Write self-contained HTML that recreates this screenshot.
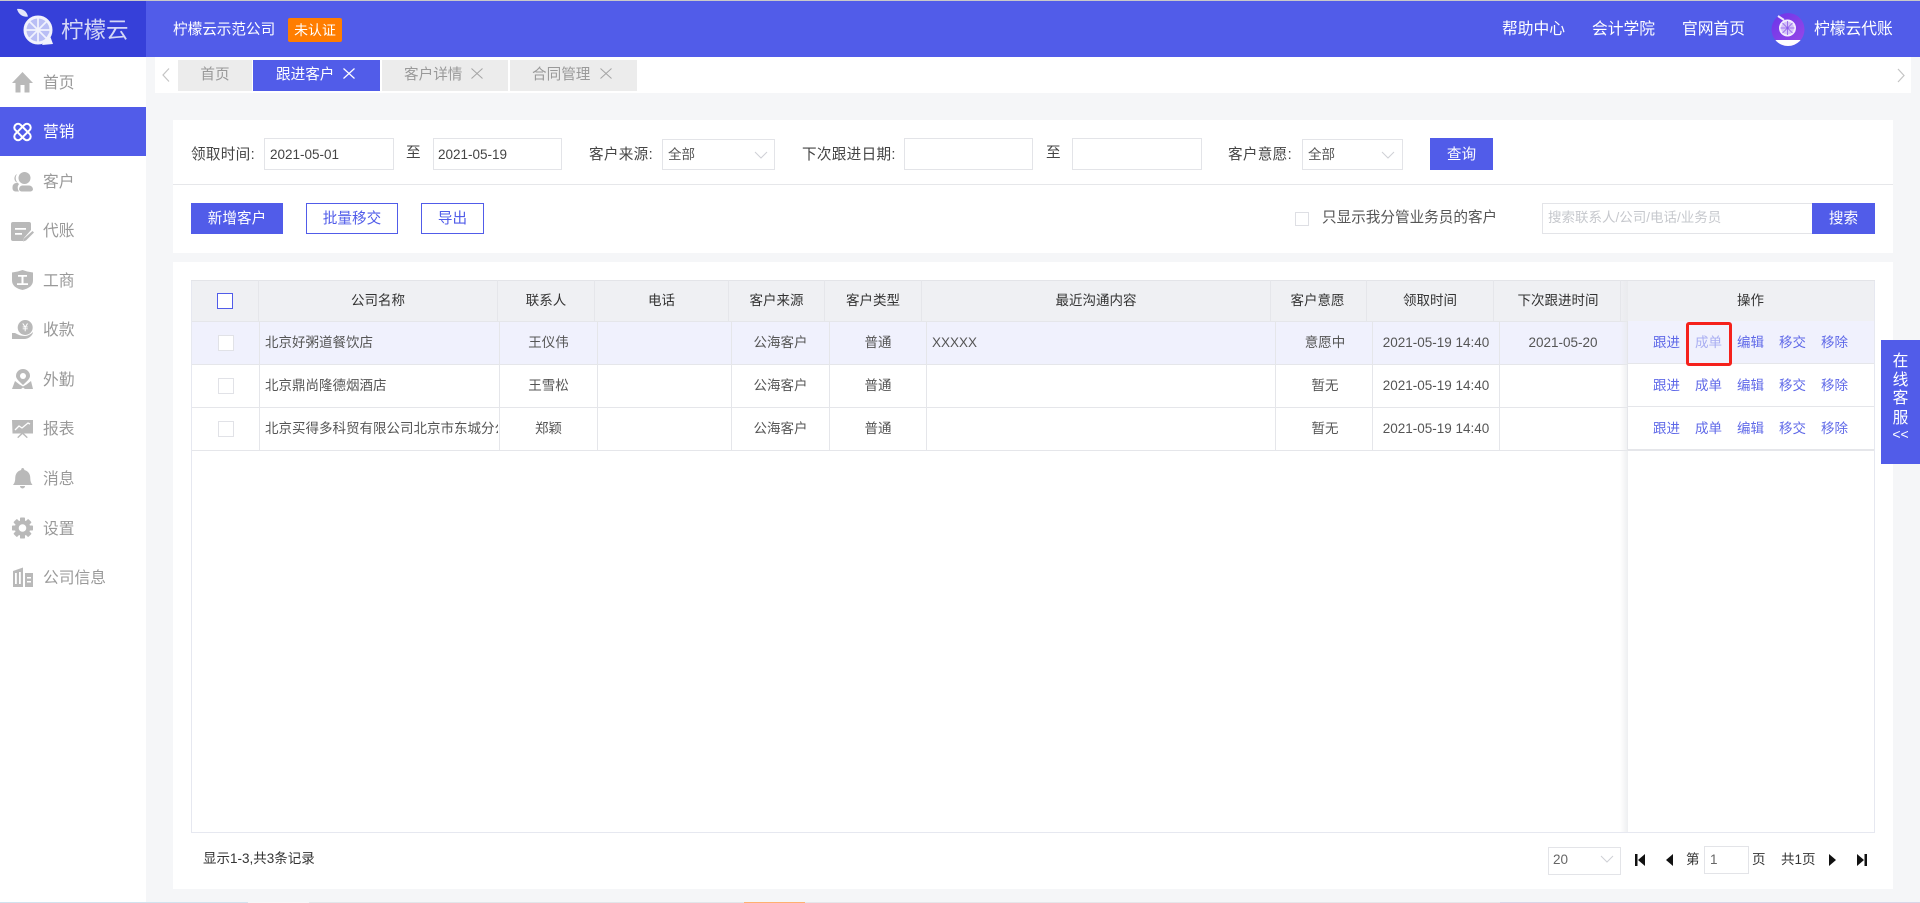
<!DOCTYPE html>
<html lang="zh-CN"><head><meta charset="utf-8"><title>柠檬云</title>
<style>
*{box-sizing:border-box;margin:0;padding:0}
html,body{width:1920px;height:903px;overflow:hidden;background:#f5f6f8}
body{position:relative;font-family:"Liberation Sans","Noto Sans CJK SC",sans-serif;font-size:13.5px;color:#555}
div,span,svg{position:absolute}
.t{white-space:nowrap;line-height:20px;height:20px}
.c{text-align:center}
.box{background:#fff;border:1px solid #e3e4e8}
.nav{left:43px;font-size:15.75px;color:#999}
.w{color:#fff}
.f{font-size:14.6px;color:#444;letter-spacing:.3px}
.tab{top:60px;height:31px;background:#ececec}
.tabt{top:65px;font-size:14.6px;color:#999}
.btn{background:#515ce9;color:#fff;font-size:14.6px;text-align:center;line-height:32px}
.q{line-height:34px}
.obtn{background:#fff;color:#515ce9;border:1px solid #515ce9;font-size:14.6px;text-align:center;line-height:30px}
.h{top:290.5px;color:#333;text-align:center}
.hl{top:280px;width:1px;height:41px;background:#e5e6ea}
.bl{top:321px;width:1px;height:129px;background:#e5e6ea}
.rl{left:192px;width:1436px;height:1px;background:#e5e6ea}
.r1{top:333px}.r2{top:376px}.r3{top:419px}
.cell{color:#555;text-align:center}
.a{color:#5f69e8;font-size:13.5px}
.cb{left:218px;width:16px;height:16px;background:#fff;border:1px solid #e1e2e7}
</style></head><body>

<!-- top bar -->
<div style="left:0;top:0;width:1920px;height:1px;background:#c9c9c9"></div>
<div style="left:0;top:1px;width:1920px;height:56px;background:#515ce9"></div>
<div style="left:0;top:1px;width:146px;height:56px;background:#3640d9"></div>
<svg style="left:14px;top:6px" width="46" height="44" viewBox="14 6 46 44">
<path d="M17 9c5-.5 9.500 1.500 11 7.500-5 1-9.500-2-11-7.500z" fill="#e4e6fa"/>
<circle cx="38" cy="30" r="13" fill="#b9bef5" stroke="#f1f2fd" stroke-width="3"/>
<path d="M49 33l4 11-11 1z" fill="#f1f2fd"/>
<path d="M38 17v26M25 30h26M29 21l18 18M47 21L29 39" stroke="#f1f2fd" stroke-width="1.800"/>
<circle cx="38" cy="30" r="2.500" fill="#f1f2fd"/>
</svg>
<div class="t" style="left:61px;top:17px;height:28px;line-height:28px;font-size:22.500px;color:#d4d7f6">柠檬云</div>
<div class="t w" style="left:173px;top:20px;font-size:14.6px">柠檬云示范公司</div>
<div style="left:288px;top:18px;width:54px;height:24px;background:#ff7d00;border-radius:2px"></div>
<div class="t w c" style="left:288px;top:20px;width:54px;font-size:13.9px">未认证</div>
<div class="t w" style="left:1502px;top:20px;font-size:15.75px">帮助中心</div>
<div class="t w" style="left:1592px;top:20px;font-size:15.75px">会计学院</div>
<div class="t w" style="left:1682px;top:20px;font-size:15.75px">官网首页</div>
<svg style="left:1771px;top:12px" width="34" height="35" viewBox="0 0 34 35">
<defs><linearGradient id="g" x1="0" y1="0" x2="1" y2="1"><stop offset="0" stop-color="#6a35ea"/><stop offset="1" stop-color="#9a48e6"/></linearGradient><clipPath id="ac"><circle cx="17" cy="17.500" r="16.500"/></clipPath></defs>
<circle cx="17" cy="17.500" r="16.500" fill="url(#g)"/>
<rect x="0" y="28" width="34" height="7" fill="#fff" clip-path="url(#ac)"/>
<path d="M7 4l6 4" stroke="#eee6fd" stroke-width="2"/>
<circle cx="16.500" cy="16" r="7.500" fill="#d4c2f8" stroke="#f3eefe" stroke-width="2"/>
<path d="M16.500 9v14M9.500 16h14M11.500 11l10 10M21.500 11l-10 10" stroke="#8d5cea" stroke-width=".8"/>
</svg>
<div class="t w" style="left:1814px;top:20px;font-size:15.75px">柠檬云代账</div>

<!-- sidebar -->
<div style="left:0;top:57px;width:146px;height:846px;background:#fff"></div>
<div style="left:0;top:107px;width:146px;height:49px;background:#515ce9"></div>
<svg style="left:0;top:57px" width="146" height="540" viewBox="0 57 146 540" fill="#b9b9b9">
<path d="M22.500 72 12 83h3.500v9.500h5V85h4v7.500h5V83H33z"/>
<g fill="none" stroke="#fff" stroke-width="2"><rect x="-10" y="-3.700" width="20" height="7.400" rx="3.600" transform="translate(22.500 132) rotate(45)"/><rect x="-10" y="-3.700" width="20" height="7.400" rx="3.600" transform="translate(22.500 132) rotate(-45)"/></g>
<circle cx="24.500" cy="178" r="6"/><path d="M17 174a5 5 0 0 0-1.500 7.500l2 1.500h-1a4 4 0 0 0-4 4v1.500a3 3 0 0 0 3 3H19a6 6 0 0 1 0-7.500 7 7 0 0 1-2-10zM22 185.500h7a4 4 0 0 1 4 3.500 2.500 2.500 0 0 1-2.500 2.500h-9a2.500 2.500 0 0 1-2.500-2.500 4 4 0 0 1 3-3.500z"/>
<path d="M13 222h16a2 2 0 0 1 2 2v6l-7 8-1 3H13a2 2 0 0 1-2-2v-15a2 2 0 0 1 2-2z"/>
<path d="M15 228h11v1.800H15zM15 233h7v1.800h-7z" fill="#fff"/><path d="M32.500 231l1.500 1.500-8 8-3 1 1-3z"/>
<path d="M22.500 270q5 2 10.500 2.500v8c0 5-4 8-10.500 9.500-6.500-1.500-10.500-4.500-10.500-9.500v-8q5.500-.5 10.500-2.500z"/>
<path d="M18 275h9v1.800h-3.500v6.400H28V285H17v-1.800h4.500v-6.400H18z" fill="#fff"/>
<circle cx="25.200" cy="327.500" r="7.500"/><path d="M12 333h3c2 1 5 3 10 3 3 0 6-2 8-4 0 3-4 7-9 7H12z"/>
<path d="M22.200 323.500h1.300l1.700 2.800 1.700-2.800h1.300l-2 3h1.500v.9h-2v1h2v.9h-2v2h-1v-2h-2v-.9h2v-1h-2v-.9h1.500z" fill="#fff"/>
<path d="M23 369a7 7 0 0 1 7 7c0 3-4 6-7 9-3-3-7-6-7-9a7 7 0 0 1 7-7z"/><circle cx="23" cy="376" r="3" fill="#fff"/>
<path d="M15 381l4.500 3.500 3.500 2 3.500-2L31 381l2 8h-8l-2-1.500-2 1.500h-9z"/>
<path d="M12 420h21v13.500H24l3.800 3.800-1 .8-4.300-4-4.300 4-1-.8 3.800-3.800h-8.500z"/>
<path d="M15 430l4-4 3 2 6-5 2 1" fill="none" stroke="#fff" stroke-width="1.300"/>
<path d="M22.500 468a1.800 1.800 0 0 1 1.800 2c4 1 6 4 6 8.500 0 3 1 5 2.200 6.500H13c1.200-1.500 2.200-3.500 2.200-6.500 0-4.500 2-7.500 6-8.500a1.800 1.800 0 0 1 1.300-2zM20 486h5a2.500 2.500 0 0 1-5 0z"/>
<g transform="translate(22.500 528)"><circle r="7.800"/><rect x="-2.500" y="-10.500" width="5" height="21" rx=".8"/><rect x="-2.500" y="-10.500" width="5" height="21" rx=".8" transform="rotate(45)"/><rect x="-2.500" y="-10.500" width="5" height="21" rx=".8" transform="rotate(90)"/><rect x="-2.500" y="-10.500" width="5" height="21" rx=".8" transform="rotate(135)"/><circle r="3.800" fill="#fff"/></g>
<path d="M13 571l10-3.500V587H13zM25 573h8v14h-8z"/>
<path d="M15 573h1.800v11H15zM19 572h1.800v12H19zM27 577h4v1.500h-4zM27 581h4v1.500h-4z" fill="#fff"/>
</svg>
<div class="t nav" style="top:74px">首页</div>
<div class="t nav" style="top:123px;color:#fff">营销</div>
<div class="t nav" style="top:173px">客户</div>
<div class="t nav" style="top:222px">代账</div>
<div class="t nav" style="top:272px">工商</div>
<div class="t nav" style="top:321px">收款</div>
<div class="t nav" style="top:371px">外勤</div>
<div class="t nav" style="top:420px">报表</div>
<div class="t nav" style="top:470px">消息</div>
<div class="t nav" style="top:520px">设置</div>
<div class="t nav" style="top:569px">公司信息</div>

<!-- tabs -->
<div style="left:155px;top:57px;width:1756px;height:36px;background:#fff"></div>
<svg style="left:155px;top:60px" width="20" height="30" fill="none" stroke="#c4c4c4" stroke-width="1.200"><path d="M14 8.500 8 15l6 6.500"/></svg>
<svg style="left:1890px;top:60px" width="20" height="30" fill="none" stroke="#c4c4c4" stroke-width="1.200"><path d="M8 9l6 6.500L8 22"/></svg>
<div class="tab" style="left:178px;width:74px"></div>
<div class="tab" style="left:253px;width:127px;background:#515ce9"></div>
<div class="tab" style="left:382px;width:126px"></div>
<div class="tab" style="left:510px;width:127px"></div>
<div class="t tabt c" style="left:178px;width:74px">首页</div>
<div class="t tabt" style="left:276px;color:#fff">跟进客户</div>
<div class="t tabt" style="left:404px">客户详情</div>
<div class="t tabt" style="left:532px">合同管理</div>
<svg style="left:343px;top:68px" width="12" height="11" stroke="#fff" stroke-width="1.200"><path d="M.5.500l11 10M11.500.500l-11 10"/></svg>
<svg style="left:471px;top:68px" width="12" height="11" stroke="#a5a5a5"><path d="M.5.500l11 10M11.500.500l-11 10"/></svg>
<svg style="left:600px;top:68px" width="12" height="11" stroke="#a5a5a5"><path d="M.5.500l11 10M11.500.500l-11 10"/></svg>

<!-- filter panel -->
<div style="left:173px;top:120px;width:1720px;height:133px;background:#fff"></div>
<div style="left:173px;top:184px;width:1720px;height:1px;background:#e6e7ea"></div>
<div class="t f" style="left:191px;top:145px">领取时间:</div>
<div class="box" style="left:264px;top:138px;width:130px;height:32px"></div>
<div class="t" style="left:270px;top:145px;color:#444">2021-05-01</div>
<div class="t f" style="left:406px;top:143px">至</div>
<div class="box" style="left:433px;top:138px;width:129px;height:32px"></div>
<div class="t" style="left:438px;top:145px;color:#444">2021-05-19</div>
<div class="t f" style="left:589px;top:145px">客户来源:</div>
<div class="box" style="left:662px;top:139px;width:113px;height:31px"></div>
<div class="t" style="left:668px;top:145px;color:#555">全部</div>
<svg style="left:754px;top:151px" width="14" height="9" fill="none" stroke="#cfd0d6"><path d="M1 1l6 6 6-6"/></svg>
<div class="t f" style="left:802px;top:145px">下次跟进日期:</div>
<div class="box" style="left:904px;top:138px;width:129px;height:32px"></div>
<div class="t f" style="left:1046px;top:143px">至</div>
<div class="box" style="left:1072px;top:138px;width:130px;height:32px"></div>
<div class="t f" style="left:1228px;top:145px">客户意愿:</div>
<div class="box" style="left:1302px;top:139px;width:101px;height:31px"></div>
<div class="t" style="left:1308px;top:145px;color:#555">全部</div>
<svg style="left:1381px;top:151px" width="14" height="9" fill="none" stroke="#cfd0d6"><path d="M1 1l6 6 6-6"/></svg>
<div class="btn q" style="left:1430px;top:138px;width:63px;height:32px">查询</div>

<div class="btn" style="left:191px;top:203px;width:92px;height:31px">新增客户</div>
<div class="obtn" style="left:306px;top:203px;width:92px;height:31px">批量移交</div>
<div class="obtn" style="left:421px;top:203px;width:63px;height:31px">导出</div>
<div style="left:1295px;top:212px;width:14px;height:14px;border:1px solid #dedfe4;background:#fff"></div>
<div class="t" style="left:1322px;top:208px;color:#555;font-size:14.6px">只显示我分管业务员的客户</div>
<div class="box" style="left:1542px;top:203px;width:271px;height:31px"></div>
<div class="t" style="left:1548px;top:208px;color:#c6c8cd">搜索联系人/公司/电话/业务员</div>
<div class="btn" style="left:1812px;top:203px;width:63px;height:31px">搜索</div>

<!-- table panel -->
<div style="left:173px;top:262px;width:1720px;height:627px;background:#fff"></div>
<div style="left:191px;top:280px;width:1684px;height:553px;border:1px solid #e6e8f0;background:#fff"></div>
<div style="left:192px;top:281px;width:1682px;height:40px;background:#eff0f3"></div>
<div style="left:191px;top:280px;width:1684px;height:1px;background:#e3e4e8"></div>
<div style="left:192px;top:321px;width:1682px;height:43px;background:#f0f1fd"></div>

<div class="hl" style="left:258px"></div><div class="hl" style="left:497px"></div><div class="hl" style="left:594px"></div><div class="hl" style="left:728px"></div><div class="hl" style="left:824px"></div><div class="hl" style="left:921px"></div><div class="hl" style="left:1270px"></div><div class="hl" style="left:1366px"></div><div class="hl" style="left:1493px"></div><div class="hl" style="left:1620px"></div>
<div class="bl" style="left:259px"></div><div class="bl" style="left:499px"></div><div class="bl" style="left:597px"></div><div class="bl" style="left:731px"></div><div class="bl" style="left:829px"></div><div class="bl" style="left:926px"></div><div class="bl" style="left:1275px"></div><div class="bl" style="left:1372px"></div><div class="bl" style="left:1499px"></div>
<div class="rl" style="top:321px"></div><div class="rl" style="top:364px"></div><div class="rl" style="top:407px"></div><div class="rl" style="top:450px"></div>

<div style="left:217px;top:293px;width:16px;height:16px;border:1px solid #515ce9;background:#fff"></div>
<div class="t h" style="left:259px;width:238px">公司名称</div>
<div class="t h" style="left:498px;width:96px">联系人</div>
<div class="t h" style="left:595px;width:133px">电话</div>
<div class="t h" style="left:729px;width:95px">客户来源</div>
<div class="t h" style="left:825px;width:96px">客户类型</div>
<div class="t h" style="left:922px;width:348px">最近沟通内容</div>
<div class="t h" style="left:1270px;width:95px">客户意愿</div>
<div class="t h" style="left:1367px;width:126px">领取时间</div>
<div class="t h" style="left:1495px;width:126px">下次跟进时间</div>

<div class="cb" style="top:335px"></div><div class="cb" style="top:378px"></div><div class="cb" style="top:421px"></div>

<div class="t r1" style="left:265px">北京好粥道餐饮店</div>
<div class="t r2" style="left:265px">北京鼎尚隆德烟酒店</div>
<div class="t r3" style="left:265px;width:233px;overflow:hidden">北京买得多科贸有限公司北京市东城分公司</div>
<div class="t cell r1" style="left:500px;width:97px">王仪伟</div>
<div class="t cell r2" style="left:500px;width:97px">王雪松</div>
<div class="t cell r3" style="left:500px;width:97px">郑颖</div>
<div class="t cell r1" style="left:732px;width:97px">公海客户</div>
<div class="t cell r2" style="left:732px;width:97px">公海客户</div>
<div class="t cell r3" style="left:732px;width:97px">公海客户</div>
<div class="t cell r1" style="left:830px;width:96px">普通</div>
<div class="t cell r2" style="left:830px;width:96px">普通</div>
<div class="t cell r3" style="left:830px;width:96px">普通</div>
<div class="t r1" style="left:932px">XXXXX</div>
<div class="t cell r1" style="left:1277px;width:96px">意愿中</div>
<div class="t cell r2" style="left:1277px;width:96px">暂无</div>
<div class="t cell r3" style="left:1277px;width:96px">暂无</div>
<div class="t cell r1" style="left:1373px;width:126px">2021-05-19 14:40</div>
<div class="t cell r2" style="left:1373px;width:126px">2021-05-19 14:40</div>
<div class="t cell r3" style="left:1373px;width:126px">2021-05-19 14:40</div>
<div class="t cell r1" style="left:1500px;width:126px">2021-05-20</div>

<!-- operations fixed column -->
<div style="left:1620px;top:281px;width:8px;height:551px;background:linear-gradient(to right,rgba(232,233,236,0),rgba(232,233,236,.75))"></div>
<div style="left:1628px;top:281px;width:246px;height:551px;background:#fff"></div>
<div style="left:1628px;top:281px;width:246px;height:40px;background:#eff0f3"></div>
<div style="left:1628px;top:321px;width:246px;height:42px;background:#f0f1fd"></div>
<div style="left:1627px;top:321px;width:1px;height:129px;background:#e5e6ea"></div>
<div style="left:1628px;top:363px;width:246px;height:1px;background:#e5e6ea"></div>
<div style="left:1628px;top:406px;width:246px;height:1px;background:#e5e6ea"></div>
<div style="left:1628px;top:449px;width:246px;height:2px;background:#e5e6ea"></div>
<div class="t h" style="left:1627px;width:247px">操作</div>

<div class="t a" style="left:1653px;top:333px">跟进</div><div class="t a" style="left:1695px;top:333px;color:#a9aef2">成单</div><div class="t a" style="left:1737px;top:333px">编辑</div><div class="t a" style="left:1779px;top:333px">移交</div><div class="t a" style="left:1821px;top:333px">移除</div>
<div class="t a" style="left:1653px;top:376px">跟进</div><div class="t a" style="left:1695px;top:376px">成单</div><div class="t a" style="left:1737px;top:376px">编辑</div><div class="t a" style="left:1779px;top:376px">移交</div><div class="t a" style="left:1821px;top:376px">移除</div>
<div class="t a" style="left:1653px;top:419px">跟进</div><div class="t a" style="left:1695px;top:419px">成单</div><div class="t a" style="left:1737px;top:419px">编辑</div><div class="t a" style="left:1779px;top:419px">移交</div><div class="t a" style="left:1821px;top:419px">移除</div>
<div style="left:1686px;top:322px;width:46px;height:44px;border:3px solid #f5211c;border-radius:3px"></div>

<!-- float -->
<div style="left:1881px;top:340px;width:39px;height:124px;background:#515ce9"></div>
<div class="t c" style="left:1881px;top:352px;width:39px;font-size:15.75px;color:#fff">在</div>
<div class="t c" style="left:1881px;top:371px;width:39px;font-size:15.75px;color:#fff">线</div>
<div class="t c" style="left:1881px;top:389px;width:39px;font-size:15.75px;color:#fff">客</div>
<div class="t c" style="left:1881px;top:409px;width:39px;font-size:15.75px;color:#fff">服</div>
<div class="t c" style="left:1881px;top:424px;width:39px;font-size:14px;color:#fff">&lt;&lt;</div>

<!-- pagination -->
<div class="t" style="left:203px;top:849px;color:#333">显示1-3,共3条记录</div>
<div class="box" style="left:1548px;top:847px;width:73px;height:28px"></div>
<div class="t" style="left:1553px;top:850px;color:#666">20</div>
<svg style="left:1600px;top:855px" width="14" height="9" fill="none" stroke="#cfd0d6"><path d="M1 1l6 6 6-6"/></svg>
<svg style="left:1634px;top:853px" width="236" height="14" fill="#111">
<path d="M1 1h2.500v12H1zM11 1v12L4 7zM39 1v12l-7-6zM195 1v12l7-6zM223 1v12l7-6zM230.500 1h2.500v12h-2.500z"/></svg>
<div class="t" style="left:1686px;top:850px;color:#333">第</div>
<div class="box" style="left:1704px;top:846px;width:45px;height:28px"></div>
<div class="t" style="left:1710px;top:850px;color:#666">1</div>
<div class="t" style="left:1752px;top:850px;color:#333">页</div>
<div class="t" style="left:1781px;top:850px;color:#333">共1页</div>

<!-- bottom strip -->
<div style="left:0;top:902px;width:248px;height:1px;background:#d2e2ee"></div>
<div style="left:309px;top:902px;width:435px;height:1px;background:#e2e6ea"></div>
<div style="left:744px;top:902px;width:61px;height:1px;background:#ffb070"></div>
<div style="left:805px;top:902px;width:695px;height:1px;background:#e6e6ea"></div>
<div style="left:1500px;top:902px;width:420px;height:1px;background:#d8d6e8"></div>
</body></html>
